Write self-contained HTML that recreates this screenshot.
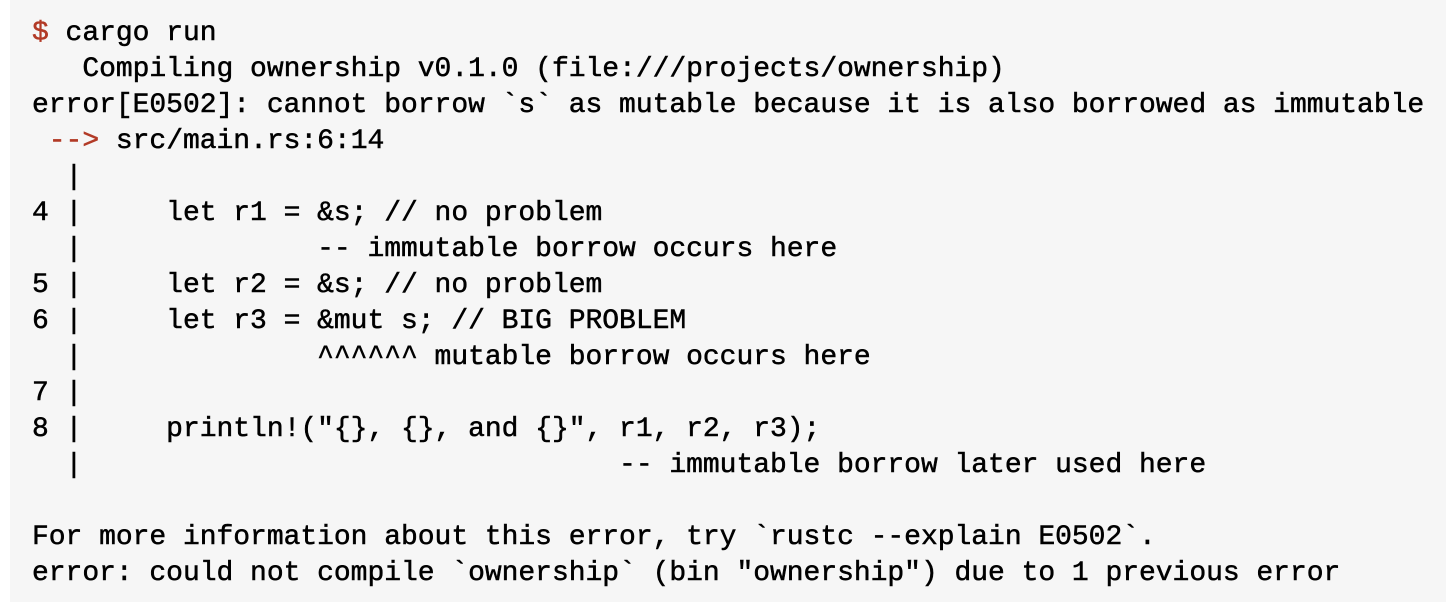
<!DOCTYPE html>
<html><head><style>
html,body{margin:0;padding:0;background:#fff;width:1446px;height:602px;overflow:hidden}
.b{position:absolute;left:10px;top:0;width:1436px;height:602px;background:#f6f6f6}
pre{position:absolute;left:32px;top:16px;margin:0;font-family:"Liberation Mono",monospace;font-size:28px;letter-spacing:-0.03px;line-height:36px;color:#000;-webkit-text-stroke:0.5px #000}
.r{color:#b23a26;-webkit-text-stroke:0.5px #b23a26}
</style></head><body><div class="b"></div><pre><span class="r">$</span> cargo run
   Compiling ownership v0.1.0 (file:///projects/ownership)
error[E0502]: cannot borrow `s` as mutable because it is also borrowed as immutable
 <span class="r">--&gt;</span> src/main.rs:6:14
  |
4 |     let r1 = &amp;s; // no problem
  |              -- immutable borrow occurs here
5 |     let r2 = &amp;s; // no problem
6 |     let r3 = &amp;mut s; // BIG PROBLEM
  |              ^^^^^^ mutable borrow occurs here
7 |
8 |     println!("{}, {}, and {}", r1, r2, r3);
  |                                -- immutable borrow later used here

For more information about this error, try `rustc --explain E0502`.
error: could not compile `ownership` (bin "ownership") due to 1 previous error</pre></body></html>
